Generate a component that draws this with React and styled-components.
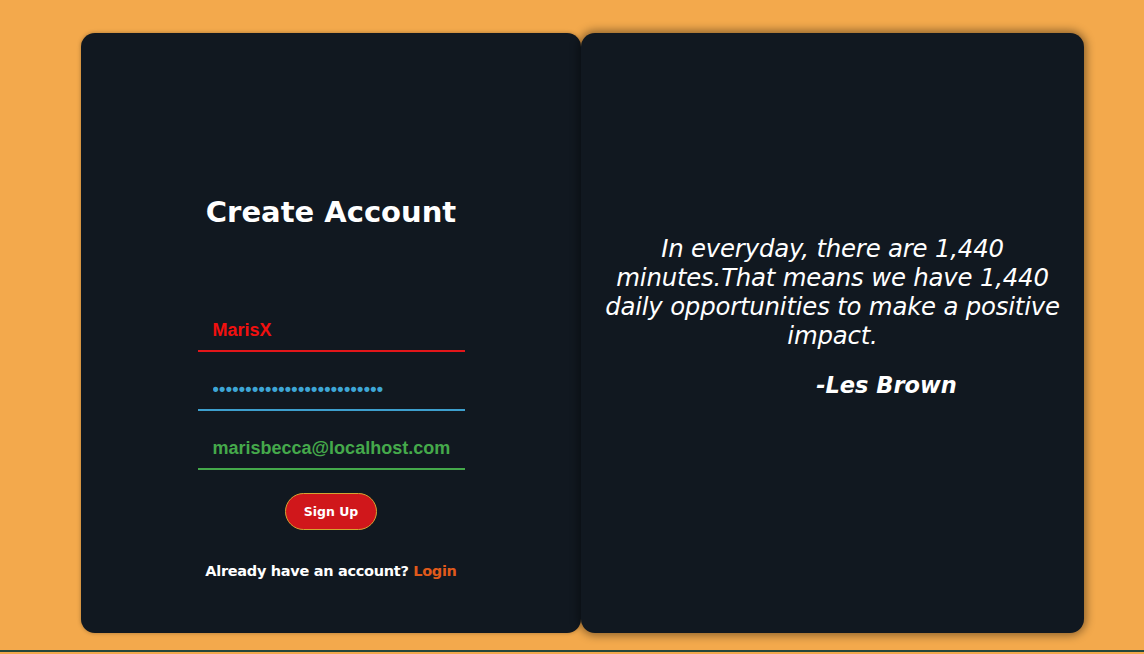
import React from "react";
import styled, { createGlobalStyle } from "styled-components";

const Global = createGlobalStyle`
  html, body { margin: 0; padding: 0; }
  body {
    background: #f3a94c;
    font-family: "DejaVu Sans", "Open Sans", sans-serif;
    height: 654px;
    overflow: hidden;
  }
`;

const Page = styled.div`
  height: 652px;
  box-sizing: border-box;
  padding: 33px 0 0 81px;
  display: flex;
  align-items: flex-start;
  border-bottom: 2px solid #24463c;
`;

const Card = styled.section`
  box-sizing: border-box;
  width: ${(p) => p.$w}px;
  height: 600px;
  background: #111820;
  border-radius: 14px;
  box-shadow: ${(p) => (p.$shadow ? "0 0 10px 2px rgba(0,0,0,0.45)" : "0 0 4px rgba(0,0,0,0.3)")};
  display: flex;
  flex-direction: column;
  align-items: center;
`;

const LeftCard = styled(Card)`
  padding-top: 160px;
`;

const RightCard = styled(Card)`
  padding: 201px 12px 0 12px;
`;

const Title = styled.h1`
  margin: 0;
  font-family: "DejaVu Sans", sans-serif;
  font-weight: 700;
  font-size: 29px;
  line-height: 38px;
  color: #ffffff;
`;

const Form = styled.form`
  display: flex;
  flex-direction: column;
  align-items: center;
  margin-top: 80px;
`;

const Field = styled.input`
  box-sizing: border-box;
  width: 267px;
  height: 41px;
  margin: 0 0 18px 0;
  padding: 0 0 0 15px;
  background: transparent;
  border: none;
  border-bottom: 2px solid ${(p) => p.$c};
  outline: none;
  color: ${(p) => p.$t || p.$c};
  font-family: "Liberation Sans", Arial, sans-serif;
  font-weight: 700;
  font-size: 18px;
  letter-spacing: ${(p) => (p.type === "password" ? "0.27px" : "0")};
`;

const Button = styled.button`
  box-sizing: border-box;
  margin-top: 5px;
  width: 92px;
  height: 37px;
  border-radius: 19px;
  border: 1px solid #d4a531;
  background: #d0171b;
  color: #ffffff;
  font-family: "DejaVu Sans", Verdana, sans-serif;
  font-weight: 700;
  font-size: 12.5px;
  cursor: pointer;
`;

const Footer = styled.p`
  margin: 31px 0 0 0;
  font-family: "DejaVu Sans", sans-serif;
  font-weight: 600;
  font-size: 14.5px;
  line-height: 20px;
  color: #ffffff;
  letter-spacing: -0.3px;
`;

const LoginLink = styled.a`
  color: #e05a1b;
  text-decoration: none;
`;

const Quote = styled.p`
  margin: 0;
  font-family: "DejaVu Sans", sans-serif;
  font-style: italic;
  font-size: 24.4px;
  line-height: 29px;
  color: #ffffff;
  text-align: center;
  letter-spacing: -0.2px;
  white-space: nowrap;
`;

const Author = styled.p`
  margin: 21px 0 0 0;
  padding-left: 108px;
  font-family: "DejaVu Sans", sans-serif;
  font-style: italic;
  font-weight: 700;
  font-size: 22.5px;
  line-height: 29px;
  color: #ffffff;
`;

export default function App() {
  return (
    <>
      <Global />
      <Page>
        <LeftCard $w={500}>
          <Title>Create Account</Title>
          <Form onSubmit={(e) => e.preventDefault()}>
            <Field type="text" defaultValue="MarisX" $c="#e3161a" $t="#f2100f" />
            <Field type="password" defaultValue="marisbecca1234567890abcdef" $c="#3d9fcd" $t="#3ea6d6" />
            <Field type="email" defaultValue="marisbecca@localhost.com" $c="#44a84a" $t="#45a94b" />
            <Button type="submit">Sign Up</Button>
          </Form>
          <Footer>
            Already have an account? <LoginLink href="#">Login</LoginLink>
          </Footer>
        </LeftCard>
        <RightCard $w={503} $shadow>
          <Quote>
            In everyday, there are 1,440
            <br />
            minutes.That means we have 1,440
            <br />
            daily opportunities to make a positive
            <br />
            impact.
          </Quote>
          <Author>-Les Brown</Author>
        </RightCard>
      </Page>
    </>
  );
}
